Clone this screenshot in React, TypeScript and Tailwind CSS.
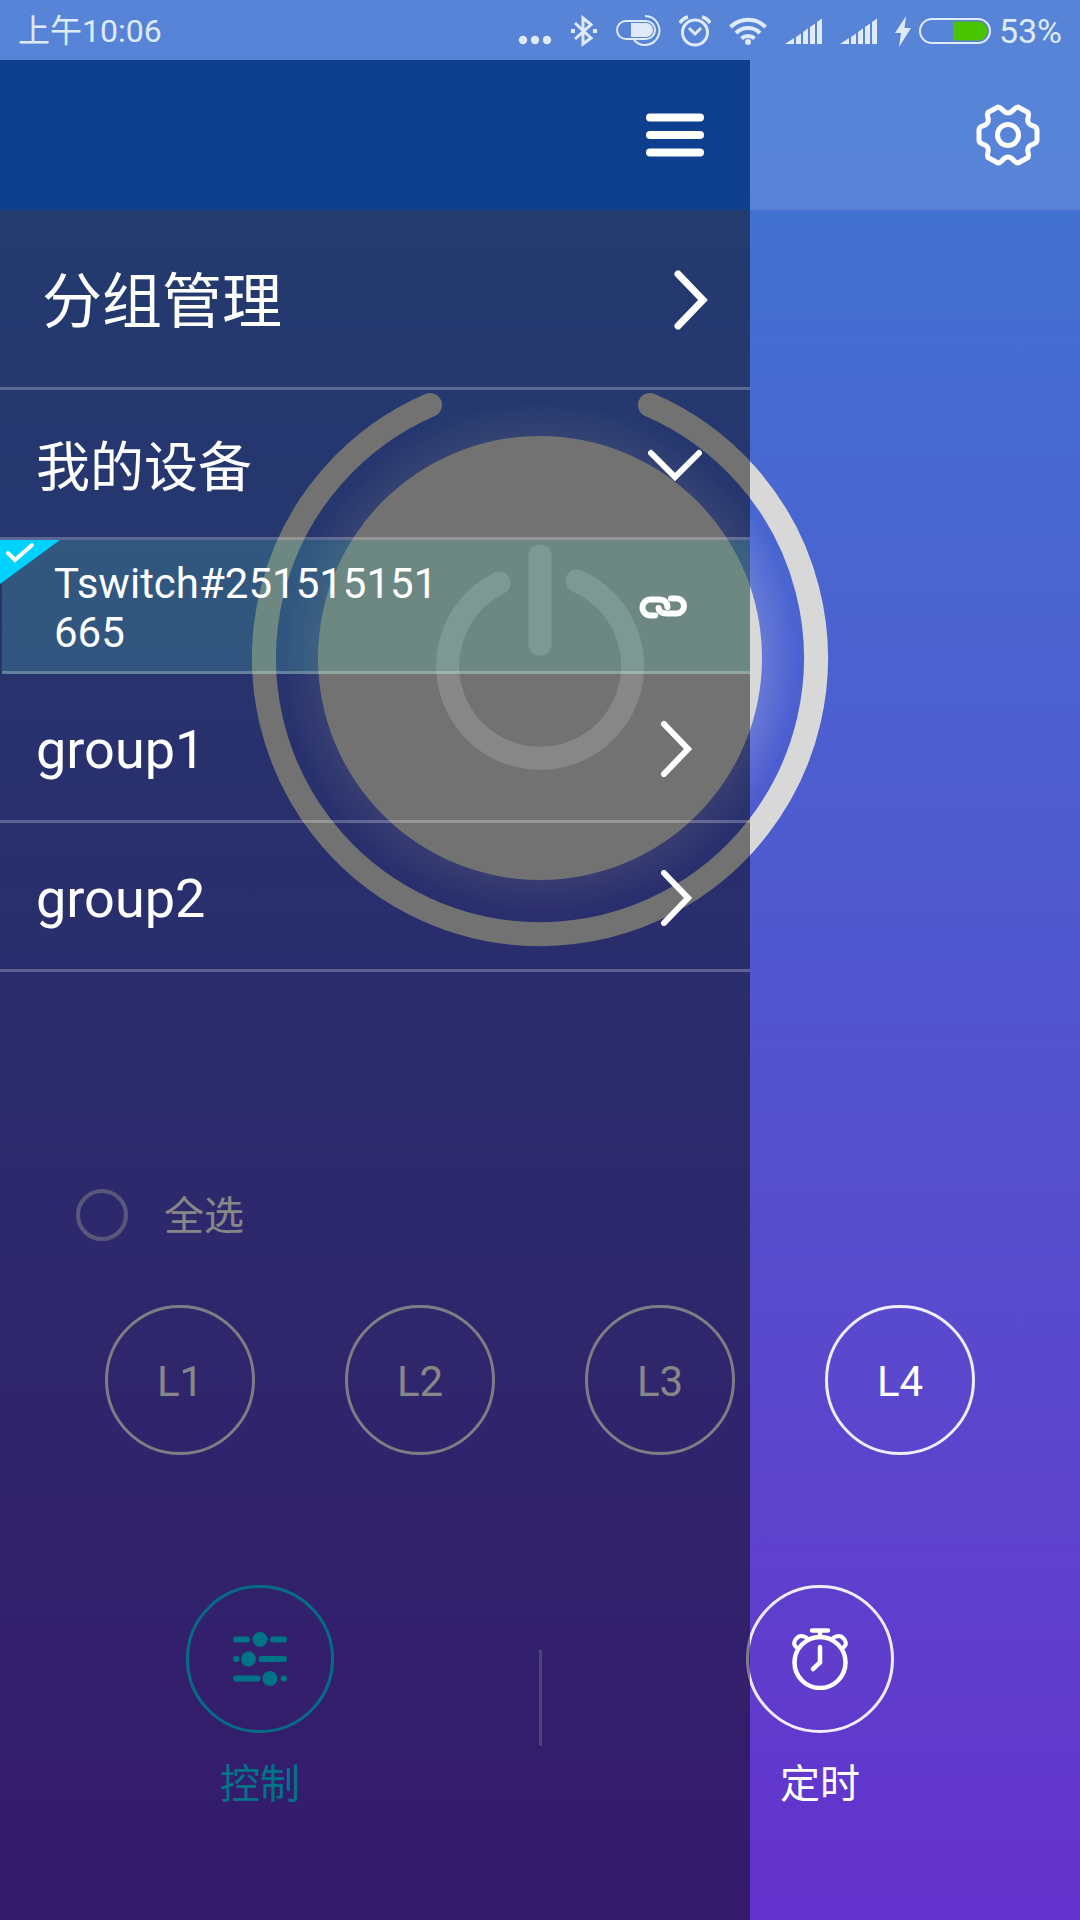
import type { ReactNode } from 'react'
import clsx from 'clsx'

const channels = ['L1', 'L2', 'L3', 'L4']
const groups = ['group1', 'group2']

const rowClass = 'flex w-full items-center justify-between border-b-3 border-white/25 pt-[3px]'

function SignalIcon() {
  return (
    <svg width="37" height="32" viewBox="0 0 37 32" fill="currentColor">
      <path d="M0 29 9 23V29ZM11 22 16 18.500V29H11ZM18 17 23 13.500V29H18ZM25 12 30 8.500V29H25ZM32 7 37 3.500V29H32Z" />
    </svg>
  )
}

function StatusBar() {
  return (
    <div className="flex h-[60px] items-center justify-between bg-white/12 px-[18px] pt-0.5 text-[32px] leading-[38px] text-[#dfeafa]">
      <span>上午10:06</span>
      <div className="flex items-center gap-[18px]">
        <svg width="34" height="32" viewBox="0 0 34 32" fill="currentColor">
          <circle cx="5" cy="25" r="4.200" />
          <circle cx="17" cy="25" r="4.200" />
          <circle cx="29" cy="25" r="4.200" />
        </svg>
        <svg width="28" height="32" viewBox="0 0 28 32" fill="none" stroke="currentColor" strokeWidth="3">
          <path d="M5 8 21 23 13 29V3L21 9.500 5 24" />
          <path d="M1 16h4M23 16h4" strokeWidth="4" />
        </svg>
        <svg width="45" height="32" viewBox="0 0 45 32" fill="none" stroke="currentColor" strokeWidth="2">
          <rect x="1" y="6" width="38" height="18" rx="9" />
          <path d="M15 8h15a7 7 0 0 1 0 14H15Z" fill="currentColor" stroke="none" />
          <path d="M29 1a14.500 14.500 0 1 1-11 24" />
        </svg>
        <svg width="32" height="32" viewBox="0 0 32 32" fill="none" stroke="currentColor" strokeWidth="3">
          <circle cx="16" cy="17.500" r="12.500" />
          <path d="M10 13 16 19 22 13" />
          <path d="M1 8Q4 3 9 2M31 8Q28 3 23 2" strokeWidth="3.500" />
        </svg>
        <svg width="38" height="32" viewBox="0 0 38 32" fill="none" stroke="currentColor" strokeWidth="4">
          <path d="M1.500 12a25 25 0 0 1 35 0M7 18a17 17 0 0 1 24 0M12.500 23.500a9.500 9.500 0 0 1 13 0" />
          <circle cx="19" cy="27" r="3" fill="currentColor" stroke="none" />
        </svg>
        <SignalIcon />
        <SignalIcon />
        <div className="flex items-center gap-2">
          <svg width="16" height="32" viewBox="0 0 16 32" fill="currentColor">
            <path d="M11 1 0 18H6L4 32 16 13H9.500Z" />
          </svg>
          <svg width="72" height="32" viewBox="0 0 72 32">
            <rect x="1" y="4" width="70" height="24" rx="12" fill="none" stroke="currentColor" strokeWidth="2" />
            <path d="M34 6.500H59a9.500 9.500 0 0 1 0 19H34Z" fill="#49c400" />
          </svg>
          <span className="text-[34px]">53%</span>
        </div>
      </div>
    </div>
  )
}

function Chevron({ down = false }: { down?: boolean }) {
  return down ? (
    <svg width="54" height="32" viewBox="0 0 54 32" fill="none" stroke="currentColor" strokeWidth="6" strokeLinecap="round">
      <path d="M3 4 27 28 51 4" />
    </svg>
  ) : (
    <svg width="32" height="56" viewBox="0 0 32 56" fill="none" stroke="currentColor" strokeWidth="6" strokeLinecap="round">
      <path d="M4 3 28 28 4 53" />
    </svg>
  )
}

function Drawer() {
  return (
    <aside className="absolute inset-y-0 left-0 w-25/36 bg-black/47">
      <div className="flex h-[150px] items-center justify-end bg-[#0e3f8e] pr-[46px]">
        <button aria-label="菜单">
          <svg width="58" height="44" viewBox="0 0 58 44" stroke="currentColor" strokeWidth="8" strokeLinecap="round">
            <path d="M4 4.500H54M4 22H54M4 39.500H54" />
          </svg>
        </button>
      </div>
      <nav>
        <button className={clsx(rowClass, 'h-[180px] px-[42px] text-[60px]')}>
          <span className="pt-1.5">分组管理</span>
          <svg width="34" height="60" viewBox="0 0 34 60" fill="none" stroke="currentColor" strokeWidth="7" strokeLinecap="round">
            <path d="M4 4 29 30 4 56" />
          </svg>
        </button>
        <button className={clsx(rowClass, 'h-[150px] pr-12 pl-9 text-[54px]')}>
          <span className="pt-1.5">我的设备</span>
          <Chevron down />
        </button>
        <div className="relative pl-[2px]">
          <button className={clsx(rowClass, 'h-[134px] bg-[#59e0c2]/20 pr-[62px] pl-[52px] text-left text-[42px] leading-[49px]')}>
            <span className="w-[390px] pt-0.5 break-all">Tswitch#251515151665</span>
            <svg width="49" height="25" viewBox="0 0 49 25" fill="none" stroke="currentColor" strokeWidth="6" strokeLinecap="round">
              <path d="M16 20.500H11.500A8 8 0 0 1 11.500 4.500H21Q28 5 28.500 12" />
              <path d="M32 3.500H37.500A7.500 7.500 0 0 1 37.500 18.500H27Q20 18 19.500 13" />
            </svg>
          </button>
          <svg className="absolute top-0 left-0" width="60" height="44" viewBox="0 0 60 44">
            <path d="M0 0H60L0 44Z" fill="#00d2ff" />
            <path d="M8 13 15 20 32 5" fill="none" stroke="currentColor" strokeWidth="4" strokeLinecap="round" />
          </svg>
        </div>
        {groups.map((name) => (
          <button key={name} className={clsx(rowClass, 'h-[149px] pr-[58px] pl-9 text-[54px]')}>
            <span className="pt-0.5">{name}</span>
            <Chevron />
          </button>
        ))}
      </nav>
    </aside>
  )
}

function PowerButton() {
  return (
    <button aria-label="电源" className="rounded-full">
      <svg width="600" height="600" viewBox="0 0 600 600" fill="none" strokeLinecap="round">
        <defs>
          <radialGradient id="glow" cx="300" cy="300" r="258" gradientUnits="userSpaceOnUse">
            <stop offset="0.85" stopColor="#fff" stopOpacity="0.16" />
            <stop offset="1" stopColor="#fff" stopOpacity="0" />
          </radialGradient>
        </defs>
        <circle cx="300" cy="300" r="258" fill="url(#glow)" />
        <path d="M190 47A276 276 0 1 0 410 47" stroke="#d8d8d8" strokeWidth="24" />
        <circle cx="300" cy="300" r="222" fill="#d8d8d8" />
        <path d="M259 225A92.500 92.500 0 1 0 337 223M300 198V286" stroke="#fff" strokeWidth="23" />
      </svg>
    </button>
  )
}

function Tab({ label, active, children }: { label: string; active?: boolean; children: ReactNode }) {
  return (
    <button className={clsx('flex flex-col items-center gap-[22px] justify-self-center', active && 'text-[#00dcff]')}>
      <span className="flex size-[148px] items-center justify-center rounded-full border-3 border-current/90">
        {children}
      </span>
      <span className="text-[40px] leading-[60px]">{label}</span>
    </button>
  )
}

export default function App() {
  return (
    <div
      lang="zh-CN"
      className="flex min-h-screen flex-col bg-linear-to-b from-[#4173d2] from-8% via-[#5056ce] via-50% to-[#6431cc] font-[Roboto,'Noto_Sans_CJK_SC',sans-serif] text-white"
    >
      <StatusBar />
      <div className="relative flex flex-1 flex-col">
        <header className="flex h-[150px] items-center justify-end bg-white/12 pr-10">
          <button aria-label="设置">
            <svg width="64" height="62" viewBox="0 0 64 62" fill="none" stroke="currentColor" strokeWidth="5" strokeLinejoin="round">
              <path d="M22 3C26 3 27 9 32 9C37 9 38 3 42 3L52 8.500C54 12 50 15 52.500 19C55 23 61 21 61 26V36C61 41 55 39 52.500 43C50 47 54 50 52 53.500L42 59C38 59 37 53 32 53C27 53 26 59 22 59L12 53.500C10 50 14 47 11.500 43C9 39 3 41 3 36V26C3 21 9 23 11.500 19C14 15 10 12 12 8.500Z" />
              <circle cx="32" cy="31" r="10.500" />
            </svg>
          </button>
        </header>

        <main className="flex flex-col pt-[148px]">
          <div className="flex justify-center">
            <PowerButton />
          </div>

          <label className="mt-[227px] flex h-[60px] items-center gap-9 pl-[76px] text-[40px] leading-[60px]">
            <input
              type="checkbox"
              className="size-[52px] appearance-none rounded-full border-4 border-white/50"
            />
            <span className="pt-1">全选</span>
          </label>

          <div className="mt-[60px] grid grid-cols-4 justify-items-center px-[60px]">
            {channels.map((name) => (
              <button key={name} className="size-[150px] rounded-full border-3 border-white/90 pt-0.5 text-[42px]">
                {name}
              </button>
            ))}
          </div>

          <div className="mt-[130px] grid grid-cols-[1fr_40px_1fr]">
            <Tab label="控制" active>
              <svg width="54" height="54" viewBox="0 0 54 54" fill="currentColor" stroke="currentColor" strokeLinecap="round">
                <path
                  d="M3 7.500H14M40 7.500H51M3 27H3.500M28.500 27H51M3 46.500H24.500M50.500 46.500H51"
                  strokeWidth="6"
                />
                <circle cx="27" cy="7.500" r="7.500" stroke="none" />
                <circle cx="15.500" cy="27" r="7.500" stroke="none" />
                <circle cx="37" cy="46.500" r="7.500" stroke="none" />
              </svg>
            </Tab>
            <div className="mt-[65px] h-24 w-[3px] justify-self-center bg-white/35" />
            <Tab label="定时">
              <svg width="60" height="62" viewBox="0 0 60 62" fill="none" stroke="currentColor" strokeWidth="4.500" strokeLinecap="round">
                <circle cx="30" cy="34.500" r="25.500" />
                <path d="M22 2.500H38M30 3V9M30 19V34.500L23 41" />
                <path d="M6 19C1 14 8 8 11 8C14 8 17 10 18 11M54 19C59 14 52 8 49 8C46 8 43 10 42 11" strokeWidth="4" />
              </svg>
            </Tab>
          </div>
        </main>

        <Drawer />
      </div>
    </div>
  )
}
